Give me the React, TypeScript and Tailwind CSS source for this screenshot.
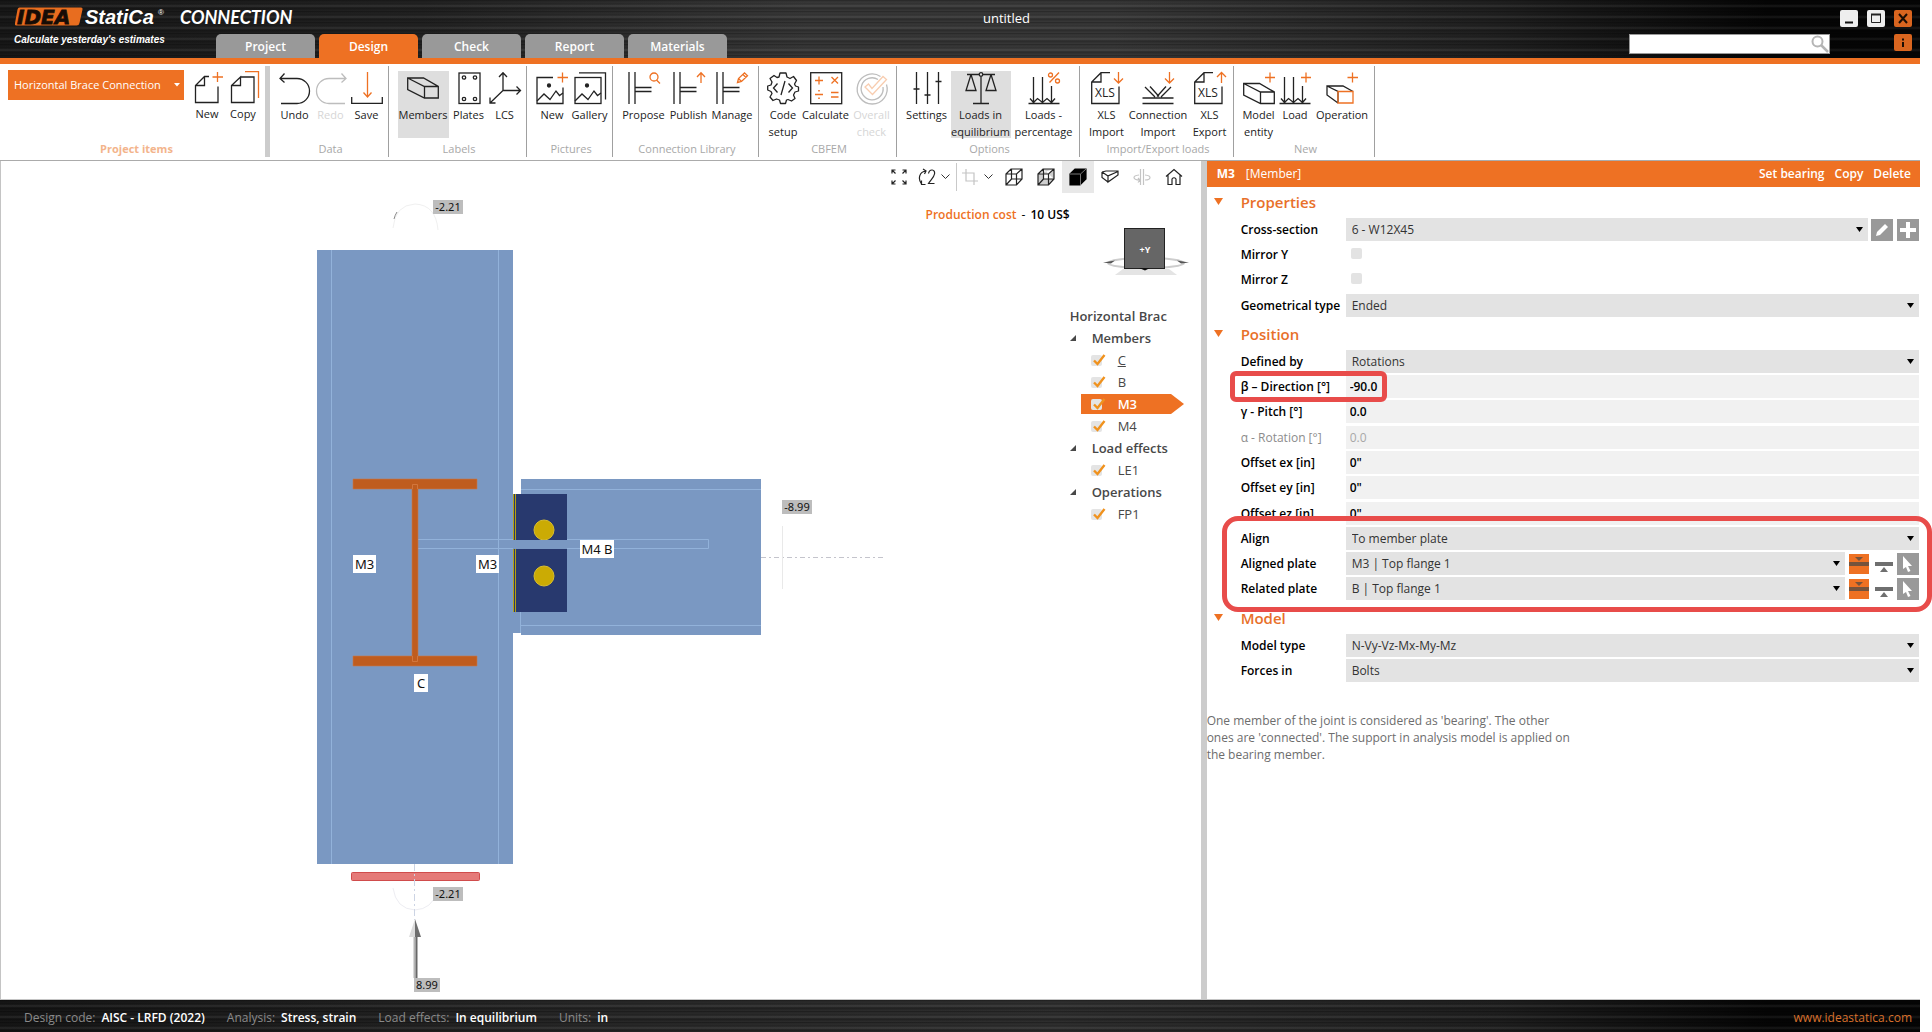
import React, { useState } from "react";

const ORANGE = "#ee7123";
const INK = "#222222";

/** --- Ribbon icons, all on a 32x32 grid --- */
const Icon: React.FC<{ children: React.ReactNode; faded?: boolean }> = ({ children, faded }) => (
  <svg
    width="32"
    height="32"
    viewBox="0 0 32 32"
    fill="none"
    stroke={faded ? "#bdbdbd" : INK}
    strokeWidth="1.3"
    className="block shrink-0 overflow-visible"
    aria-hidden="true"
  >
    {children}
  </svg>
);

const icons: Record<string, React.ReactNode> = {
  newItem: (
    <Icon>
      <path d="M27 15.500V31.500H4.500V14.500L13.500 5.500H18M13.500 5.500V14.500H4.500" />
      <path d="M26.500 1V11M21.500 6H32" stroke={ORANGE} />
    </Icon>
  ),
  copyItem: (
    <Icon>
      <path d="M14 6H27V31.500H4.500V14.500L13.500 6V14.500H4.500" />
      <path d="M18 .7H31.500V27" stroke={ORANGE} />
    </Icon>
  ),
  undo: (
    <Icon>
      <path d="M5.500 1.500L1 6.500L5.500 10.500M1 6.500H18A12.500 12.500 0 0 1 18 31.500H2" />
    </Icon>
  ),
  redo: (
    <Icon faded>
      <path d="M26.500 1.500L31 6.500L26.500 10.500M31 6.500H14A12.500 12.500 0 0 0 14 31.500H30" />
    </Icon>
  ),
  save: (
    <Icon>
      <path d="M.7 25V31.300H31.300V25" />
      <path d="M16.500 0V25M12.500 20.500L16.500 25L20.500 20.500" stroke={ORANGE} />
    </Icon>
  ),
  members: (
    <Icon>
      <path d="M.7 6H16.500L31.300 14.500V26H17.500L.7 17.500ZM.7 6L17.500 14.500H31.300M17.500 14.500V26" />
    </Icon>
  ),
  plates: (
    <Icon>
      <rect x="6" y="1" width="21" height="30.500" />
      <circle cx="11" cy="5.500" r="1.700" />
      <circle cx="22" cy="5.500" r="1.700" />
      <circle cx="11" cy="27" r="1.700" />
      <circle cx="22" cy="27" r="1.700" />
    </Icon>
  ),
  lcs: (
    <Icon>
      <path d="M14 1V18.500L1 31M14 18.500H31.500M10 5L14 .8L18 5M27.500 14.500L31.500 18.500L27.500 22.500M1 25.500V31H6.500" />
    </Icon>
  ),
  newPicture: (
    <Icon>
      <path d="M17 5.500H1V31.500H27V15.500" />
      <path d="M1 29L8 22L14 27.500L20 19L23.500 23.500L27 21" />
      <circle cx="13" cy="13.500" r="1.500" fill={INK} />
      <path d="M26.500 .5V10.500M21.500 5.500H32" stroke={ORANGE} />
    </Icon>
  ),
  gallery: (
    <Icon>
      <rect x="1" y="5.500" width="26" height="26" />
      <path d="M1 29L8 22L14 27.500L20 19L23.500 23.500L27 21M5 .8H31.500V27.500" />
      <circle cx="13" cy="13.500" r="1.500" fill={INK} />
    </Icon>
  ),
  propose: (
    <Icon>
      <path d="M1 0V32M7 0V32M7 15.500H23.500M7 19.500H23.500" />
      <circle cx="26" cy="5" r="4" stroke={ORANGE} />
      <path d="M28.500 8L32 11.500" stroke={ORANGE} />
    </Icon>
  ),
  publish: (
    <Icon>
      <path d="M1 0V32M7 0V32M7 15.500H23.500M7 19.500H23.500" />
      <path d="M28 11V1M24 5L28 .8L32 5" stroke={ORANGE} />
    </Icon>
  ),
  manage: (
    <Icon>
      <path d="M1 0V32M7 0V32M7 15.500H23.500M7 19.500H23.500" />
      <path d="M21.500 10.500L22.500 6.500L28.500 .8L31.500 3.800L25.500 9.500ZM22.500 6.500L25.500 9.500M27 2.500L30 5.500" stroke={ORANGE} />
    </Icon>
  ),
  code: (
    <Icon>
      <path d="M13 1H19L20 5L23 6.500L26.500 4.500L29.500 8.500L27.500 12L28.500 14L31.500 15V19L28 20L26.500 23L28 26.500L24.500 29L21 27.500L19.500 28L18.500 31.500H13.500L12.500 28L9.500 27L6 28.500L3 25L5 21.500L4 19.500L.7 18V14L4 13L5 10L3 6.500L7 3.500L10 5.500L12 5Z" strokeLinejoin="round" />
      <path d="M10.500 11.500L6.500 16L10.500 20.500M21.500 11.500L25.500 16L21.500 20.500M18 9L14 23" />
    </Icon>
  ),
  calculate: (
    <Icon>
      <rect x=".7" y=".7" width="31" height="31" />
      <path d="M5 8.500H13M9 4.500V12.500M21.500 5L28 11.500M28 5L21.500 11.500M5 22.500H13M21 20.500H28.500M21 25H28.500" stroke={ORANGE} />
      <path d="M9 18V19.500M9 25.500V27" stroke={ORANGE} strokeWidth="1.6" />
    </Icon>
  ),
  overall: (
    <Icon faded>
      <path d="M24.500 4.500A15 15 0 1 0 30.500 12.500" />
      <path d="M22 7.500A11 11 0 1 0 27 15" />
      <path d="M9 15L12.500 12L16 16.500L27 4.500L30.500 7.500L16.500 22.500Z" stroke="#f8cdb0" />
    </Icon>
  ),
  settings: (
    <Icon>
      <path d="M5.500 0V32M16.500 0V32M27.500 0V32M2.500 17H8.500M13.500 23H19.500M24.500 9.500H30.500" />
    </Icon>
  ),
  equilibrium: (
    <Icon>
      <path d="M2 2.500H14M18 2.500H30M16 4.500V31.500M8 31.500H24M6 2.500L1 18.500H11L6 2.500M26 2.500L21 18.500H31L26 2.500" />
      <circle cx="16" cy="2.500" r="1.800" />
    </Icon>
  ),
  percentage: (
    <Icon>
      <path d="M.5 31.500H31.500M5.500 5V30M14.500 5V30M23.500 14V30M2 26.500L5.500 30.500L9.500 26.500L14.500 30.500L19 26.500L23.500 30.500L27 26.500" />
      <path d="M31 .5L21.500 10.500" stroke={ORANGE} />
      <circle cx="22.500" cy="3" r="2" stroke={ORANGE} />
      <circle cx="29.500" cy="9" r="2" stroke={ORANGE} />
    </Icon>
  ),
  xlsImport: (
    <Icon>
      <path d="M28 14.500V31.500H.7V10L10 .7H19M10 .7V10H.7" />
      <text x="4" y="25" fontSize="12" stroke="none" fill={INK}>XLS</text>
      <path d="M27.500 0V10.500M23 6.500L27.500 11L32 6.500" stroke={ORANGE} />
    </Icon>
  ),
  connectionImport: (
    <Icon>
      <path d="M.5 26H31.500M.5 31.500H31.500M3 15L13 25M8 14.500L17 24.500M29 15L19 25M24 14.500L15 24.500" />
      <path d="M27.500 0V10.500M23 6.500L27.500 11L32 6.500" stroke={ORANGE} />
    </Icon>
  ),
  xlsExport: (
    <Icon>
      <path d="M28 14.500V31.500H.7V10L10 .7H19M10 .7V10H.7" />
      <text x="4" y="25" fontSize="12" stroke="none" fill={INK}>XLS</text>
      <path d="M27.500 11V.5M23 5L27.500 .5L32 5" stroke={ORANGE} />
    </Icon>
  ),
  model: (
    <Icon>
      <path d="M.7 11.500H16.500L31.300 20V31.500H17.500L.7 23ZM.7 11.500L17.500 20H31.300M17.500 20V31.500" />
      <path d="M27 .5V10.500M22 5.500H32" stroke={ORANGE} />
    </Icon>
  ),
  load: (
    <Icon>
      <path d="M.5 31.500H31.500M5.500 5V30M14.500 5V30M23.500 14V30M2 26.500L5.500 30.500L9.500 26.500L14.500 30.500L19 26.500L23.500 30.500L27 26.500" />
      <path d="M27 .5V10.500M22 5.500H32" stroke={ORANGE} />
    </Icon>
  ),
  operation: (
    <Icon>
      <path d="M12 31L1 23V14H17L27 19.500M1 14L12 19.500V31" />
      <path d="M12 19.500H27V31H12ZM26.500 .5V10.500M21.500 5.500H32" stroke={ORANGE} />
    </Icon>
  ),
};

type Tool = { icon: string; lines: string[]; width: string; active?: boolean; disabled?: boolean };
type Group = { title: string; width: string; tools: Tool[] };

const groups: Group[] = [
  {
    title: "Data",
    width: "w-[119px]",
    tools: [
      { icon: "undo", lines: ["Undo"], width: "w-[36px]" },
      { icon: "redo", lines: ["Redo"], width: "w-[36px]", disabled: true },
      { icon: "save", lines: ["Save"], width: "w-[36px]" },
    ],
  },
  {
    title: "Labels",
    width: "w-[138px]",
    tools: [
      { icon: "members", lines: ["Members"], width: "w-[51px]", active: true },
      { icon: "plates", lines: ["Plates"], width: "w-[40px]" },
      { icon: "lcs", lines: ["LCS"], width: "w-[32px]" },
    ],
  },
  {
    title: "Pictures",
    width: "w-[86px]",
    tools: [
      { icon: "newPicture", lines: ["New"], width: "w-[37px]" },
      { icon: "gallery", lines: ["Gallery"], width: "w-[38px]" },
    ],
  },
  {
    title: "Connection Library",
    width: "w-[146px]",
    tools: [
      { icon: "propose", lines: ["Propose"], width: "w-[46px]" },
      { icon: "publish", lines: ["Publish"], width: "w-[44px]" },
      { icon: "manage", lines: ["Manage"], width: "w-[43px]" },
    ],
  },
  {
    title: "CBFEM",
    width: "w-[138px]",
    tools: [
      { icon: "code", lines: ["Code", "setup"], width: "w-[35px]" },
      { icon: "calculate", lines: ["Calculate"], width: "w-[50px]" },
      { icon: "overall", lines: ["Overall", "check"], width: "w-[42px]", disabled: true },
    ],
  },
  {
    title: "Options",
    width: "w-[183px]",
    tools: [
      { icon: "settings", lines: ["Settings"], width: "w-[48px]" },
      { icon: "equilibrium", lines: ["Loads in", "equilibrium"], width: "w-[60px]", active: true },
      { icon: "percentage", lines: ["Loads -", "percentage"], width: "w-[66px]" },
    ],
  },
  {
    title: "Import/Export loads",
    width: "w-[154px]",
    tools: [
      { icon: "xlsImport", lines: ["XLS", "Import"], width: "w-[43px]" },
      { icon: "connectionImport", lines: ["Connection", "Import"], width: "w-[60px]" },
      { icon: "xlsExport", lines: ["XLS", "Export"], width: "w-[43px]" },
    ],
  },
  {
    title: "New",
    width: "w-[141px]",
    tools: [
      { icon: "model", lines: ["Model", "entity"], width: "w-[37px]" },
      { icon: "load", lines: ["Load"], width: "w-[36px]" },
      { icon: "operation", lines: ["Operation"], width: "w-[58px]" },
    ],
  },
];

const ToolButton: React.FC<{ tool: Tool }> = ({ tool }) => (
  <button
    disabled={tool.disabled}
    className={`flex h-[67px] flex-col items-center pt-px text-[11px] leading-[17px] whitespace-nowrap ${tool.width} ${
      tool.active ? "bg-[#dedede]" : ""
    } ${tool.disabled ? "text-[#d6d6d6]" : "text-[#222222]"}`}
  >
    {icons[tool.icon]}
    <span className="mt-0.5 flex flex-col items-center">
      {tool.lines.map((line) => (
        <span key={line}>{line}</span>
      ))}
    </span>
  </button>
);

/** --- Black title bar with tabs --- */
const tabs = ["Project", "Design", "Check", "Report", "Materials"];

const TitleBar: React.FC = () => {
  const [tab, setTab] = useState("Design");
  return (
    <header className="flex h-16 border-b-[6px] border-[#ee7123] bg-[#111111] bg-[repeating-linear-gradient(180deg,#00000055_0px,#00000000_2px,#00000022_4px,#ffffff14_6px,#00000044_8px,#00000000_11px),linear-gradient(90deg,#181818_0%,#222222_22%,#383838_42%,#383838_58%,#202020_78%,#050505_92%)] text-white">
      <div className="w-[180px] pt-[6px] pl-[13px]">
        <svg width="160" height="40" viewBox="0 0 160 40" className="block" role="img" aria-label="IDEA StatiCa">
          <path d="M6.500 1.500H68Q70 1.500 69.500 3.500L66.500 17Q66 19.500 63.500 19.500H3Q1.500 19.500 2 17L4.500 3.500Q5 1.500 6.500 1.500Z" fill="#e86d1f" />
          <text x="4" y="17.500" fontSize="20" fontWeight="bold" fontStyle="italic" fontFamily="DejaVu Sans" fill="#160c06" stroke="#160c06" strokeWidth=".8">IDEA</text>
          <text x="72" y="18" fontSize="20" fontWeight="bold" fontStyle="italic" fontFamily="Liberation Sans" fill="#fff">StatiCa</text>
          <text x="145" y="9" fontSize="8" fontFamily="Liberation Sans" fill="#fff">®</text>
          <text x="1" y="37" fontSize="10" fontWeight="bold" fontStyle="italic" fontFamily="Liberation Sans" fill="#fff">Calculate yesterday's estimates</text>
        </svg>
      </div>
      <div className="flex flex-1 flex-col justify-between">
        <div className="flex pt-[6px]">
          <span className="w-[204px] font-['Lato',sans-serif] text-lg leading-[22px] font-bold italic">
            CONNECTION
          </span>
          <span className="flex-1 text-center text-[13px] leading-6">untitled</span>
        </div>
        <nav className="flex gap-1 pl-9">
          {tabs.map((t) => (
            <button
              key={t}
              onClick={() => setTab(t)}
              className={`h-6 w-[99px] rounded-t-[5px] pt-0.5 text-xs font-semibold ${t === tab ? "bg-[#ee7123]" : "bg-[#999999]"}`}
            >
              {t}
            </button>
          ))}
        </nav>
      </div>
      <div className="flex w-[291px] flex-col items-end gap-[7px] pt-[10px] pr-2">
        <div className="flex gap-[9px]">
          <button aria-label="Minimize" className="h-[17px] w-[18px] rounded-xs bg-[#eeeeee]">
            <svg width="18" height="17"><path d="M5 12.500H13" stroke="#111" strokeWidth="2" /></svg>
          </button>
          <button aria-label="Maximize" className="h-[17px] w-[18px] rounded-xs bg-[#eeeeee]">
            <svg width="18" height="17"><path d="M4.500 4.500H13.500V12.500H4.500Z" stroke="#222" fill="none" /><path d="M4 4.500H14" stroke="#222" strokeWidth="2" /></svg>
          </button>
          <button aria-label="Close" className="h-[17px] w-[18px] rounded-xs bg-[#d9651f]">
            <svg width="18" height="17"><path d="M5 4L13 13M13 4L5 13" stroke="#1a0d04" strokeWidth="2" /></svg>
          </button>
        </div>
        <div className="flex w-full justify-between">
          <label className="flex h-5 w-[201px] border border-[#999999] bg-white">
            <input type="text" aria-label="Search" className="min-w-0 flex-1 px-1 text-xs text-black outline-none" />
            <svg width="18" height="18" fill="none" stroke="#b5b5b5" strokeWidth="2"><circle cx="6.500" cy="6.500" r="5" /><path d="M10 10L17 17" strokeWidth="2.500" /></svg>
          </label>
          <button aria-label="About" className="h-[17px] w-[18px] rounded-xs bg-[#d9651f]">
            <svg width="18" height="17"><path d="M9 4.500V6.500M9 8V13" stroke="#1a0d04" strokeWidth="2" /></svg>
          </button>
        </div>
      </div>
    </header>
  );
};

const Ribbon: React.FC = () => (
  <div className="flex h-[97px] border-b border-[#ababab] pt-0.5 pb-[3px]">
    <div className="flex w-[270px] flex-col justify-between border-r-[5px] border-[#cccccc] pl-2">
      <div className="flex pt-1">
        <button className="mr-[6px] flex h-[30px] w-[176px] items-center justify-between bg-[#ee7123] pr-1 pl-[6px] text-[11px] whitespace-nowrap text-white">
          Horizontal Brace Connection
          <svg width="6" height="4"><path d="M0 0H6L3 3.500Z" fill="#fff" /></svg>
        </button>
        <ToolButton tool={{ icon: "newItem", lines: ["New"], width: "w-[34px]" }} />
        <ToolButton tool={{ icon: "copyItem", lines: ["Copy"], width: "w-[38px]" }} />
      </div>
      <span className="text-center text-[11px] leading-4 font-bold text-[#f3b48c]">Project items</span>
    </div>
    {groups.map((g) => (
      <div key={g.title} className={`flex flex-col justify-between border-r border-[#a0a0a0] pl-[3px] ${g.width}`}>
        <div className="flex justify-center pt-[5px]">
          {g.tools.map((t) => (
            <ToolButton key={t.icon} tool={t} />
          ))}
        </div>
        <span className="text-center text-[11px] leading-4 text-[#a8a8a8]">{g.title}</span>
      </div>
    ))}
  </div>
);

/** --- 3D scene, front view --- */
const Tag: React.FC<{ x: number; y: number; w: number; text: string; grey?: boolean }> = ({
  x,
  y,
  w,
  text,
  grey,
}) => (
  <g>
    <rect x={x} y={y} width={w} height={grey ? 14 : 18} fill={grey ? "#bdbdbd" : "#fff"} />
    <text x={x + w / 2} y={y + (grey ? 11 : 14)} textAnchor="middle" fontSize={grey ? 11 : 13} fill="#111">
      {text}
    </text>
  </g>
);

const Scene: React.FC = () => (
  <svg width="1063" height="838" viewBox="1 161 1063 838" className="block font-['Noto_Sans',sans-serif]">
    {/* moment arcs */}
    <path d="M393 228Q395 205 415 204Q436 205 438 230" fill="none" stroke="#f0f0f0" />
    <path d="M394 219Q395 215 397 212" fill="none" stroke="#8a8a8a" />
    <path d="M393 888Q396 909 415 910Q432 909 437 892" fill="none" stroke="#ededf2" />

    {/* column C */}
    <rect x="317" y="250" width="196" height="614" fill="#7a98c2" />
    <path d="M331.500 250V864M498.500 250V864" stroke="#92b2da" />

    {/* beam B */}
    <rect x="513" y="495" width="9" height="138" fill="#7a98c2" />
    <rect x="521" y="479" width="240" height="156" fill="#7a98c2" />
    <path d="M521 489.500H761M521 625.500H761M520.500 611V633" stroke="#92b2da" />

    {/* fin plates and bolts */}
    <rect x="513" y="494" width="54" height="118" fill="#28396e" />
    <path d="M513.500 494V612M515.500 494V612" stroke="#b3a114" />
    <circle cx="544" cy="530" r="10" fill="#cbab04" stroke="#d9be2e" />
    <circle cx="544" cy="576" r="10" fill="#cbab04" stroke="#d9be2e" />
    <rect x="512" y="540" width="60" height="9" fill="#7a98c2" />
    <path d="M417 539.500H513M567 539.500H708.500V548.500H567M417 548.500H513" fill="none" stroke="#92b2da" />

    {/* selected member M3 */}
    <path d="M353 479H477V489H418V656H477V666H353V656H412V489H353Z" fill="#bf5c1e" stroke="#c87a4c" strokeWidth=".6" />
    <path d="M412.500 489V484.500H417.500V489M412.500 656V661.500H417.500V656" fill="none" stroke="#d2763c" />

    {/* support and loads */}
    <rect x="351.500" y="872.500" width="128" height="8" rx="1" fill="#e57a78" stroke="#d04c4c" />
    <path d="M414.500 864V920" stroke="#ccd4e4" strokeDasharray="7 3 2 3" />
    <path d="M761 557.500H884" stroke="#c4c4cc" strokeDasharray="5 3 2 3" />
    <path d="M782.500 526V589" stroke="#e9e9e9" />
    <path d="M415 919L409 937H415Z" fill="#dcdcdc" />
    <path d="M415 919L421 937H415Z" fill="#6f6f6f" />
    <path d="M414.500 937V978" stroke="#b5b5b5" strokeWidth="2" />
    <path d="M416.500 937V978" stroke="#686868" strokeWidth="2" />

    <Tag x={433} y={200} w={30} text="-2.21" grey />
    <Tag x={782} y={500} w={30} text="-8.99" grey />
    <Tag x={433} y={887} w={30} text="-2.21" grey />
    <Tag x={414} y={978} w={26} text="8.99" grey />
    <Tag x={353} y={555} w={23} text="M3" />
    <Tag x={476} y={555} w={23} text="M3" />
    <Tag x={580} y={540} w={34} text="M4 B" />
    <Tag x={414} y={674} w={14} text="C" />
  </svg>
);

/** --- Toolbar over the 3D view --- */
const ViewIcon: React.FC<{ d: string; light?: boolean; fill?: string; children?: React.ReactNode }> = ({
  d,
  light,
  fill = "none",
  children,
}) => (
  <svg width="18" height="18" viewBox="0 0 18 18" fill={fill} stroke={light ? "#c4c4c4" : "#222"} strokeWidth="1.2">
    <path d={d} />
    {children}
  </svg>
);

const CUBE = "M1 6L6 1H17V11L11.500 17H1ZM1 6H11.500L17 1M11.500 6V17";

const ViewToolbar: React.FC = () => (
  <div className="mr-px flex h-8 items-center">
    <button aria-label="Zoom all" className="flex h-8 w-7 items-center justify-center">
      <ViewIcon d="M2 5.500V2H5.500M2 2L5.500 5.500M12.500 2H16V5.500M16 2L12.500 5.500M2 12.500V16H5.500M2 16L5.500 12.500M16 12.500V16H12.500M16 16L12.500 12.500" />
    </button>
    <button aria-label="Rotate view" className="flex h-8 w-7 items-center justify-center">
      <ViewIcon d="M3.500 16C-.5 10.500 1.500 3.500 8 3M5 1L8 3L6.500 6M7.500 16.500H3.500V12.500M10.500 5.500C11.500 .5 17.500 1 16.500 6C16 9.500 12.500 12 10.500 15.500H16.500" />
    </button>
    <button aria-label="View options" className="flex h-8 w-[15px] items-center">
      <svg width="9" height="6" fill="none" stroke="#333"><path d="M.5 .5L4.500 4.500L8.500 .5" /></svg>
    </button>
    <span className="h-7 w-px bg-[#c9c9c9]" />
    <button aria-label="Clip" className="flex h-8 w-[27px] items-center justify-center">
      <ViewIcon light d="M5 1V13H17M1 5H13V17" />
    </button>
    <button aria-label="Clip options" className="flex h-8 w-[14px] items-center">
      <svg width="9" height="6" fill="none" stroke="#333"><path d="M.5 .5L4.500 4.500L8.500 .5" /></svg>
    </button>
    <button aria-label="Wireframe" className="flex h-8 w-8 items-center justify-center">
      <ViewIcon d={`${CUBE}M6.500 1V11H17M1 17L6.500 11`} />
    </button>
    <button aria-label="Transparent" className="flex h-8 w-8 items-center justify-center">
      <ViewIcon fill="#cfcfcf" d={`${CUBE}M6.500 1V11H17M1 17L6.500 11`} />
    </button>
    <button aria-label="Solid" className="flex h-8 w-8 items-center justify-center bg-[#e8e8e8]">
      <ViewIcon d="">
        <path d="M1 6L6 1H17V11L11 17H1Z" fill="#000" stroke="#000" />
        <path d="M1 6H11.500L17 1M11.500 6V17" stroke="#777" strokeWidth="1" />
      </ViewIcon>
    </button>
    <button aria-label="Section" className="flex h-8 w-8 items-center justify-center">
      <ViewIcon d="M1 4L5 3H17V7L7 14V8L17 3.500M1 4L7 8M1 4V9.500L7 14" />
    </button>
    <button aria-label="Mirror" className="flex h-8 w-8 items-center justify-center">
      <ViewIcon light d="M7.500 1V17M10.500 1V17M6 7Q1 7.500 1 9.500Q1 12 7 12M5 10L7 12L5 14.500M12 7Q17 7.500 17 9.500Q17 12 12 12" />
    </button>
    <button aria-label="Home" className="flex h-8 w-8 items-center justify-center">
      <ViewIcon d="M1 8.500L9 1.500L17 8.500M3 7V16.500H7V11Q9 8.500 11 11V16.500H15V7" />
    </button>
  </div>
);

/** --- Entity tree --- */
const tree = [
  { title: "Members", items: ["C", "B", "M3", "M4"] },
  { title: "Load effects", items: ["LE1"] },
  { title: "Operations", items: ["FP1"] },
];

const EntityTree: React.FC = () => (
  <div className="w-[115px] text-[13px] leading-[22px] text-[#484848]">
    <div className="font-semibold whitespace-nowrap">Horizontal Brac</div>
    {tree.map((branch) => (
      <div key={branch.title}>
        <div className="flex items-center font-semibold whitespace-nowrap">
          <svg width="6" height="6" className="mr-4"><path d="M6 0V6H0Z" fill="#484848" /></svg>
          {branch.title}
        </div>
        {branch.items.map((item) => (
          <label
            key={item}
            className={`relative ml-[11px] flex h-[22px] items-center pl-[10px] ${item === "M3" ? "font-semibold text-white" : ""}`}
          >
            {item === "M3" && (
              <svg width="103" height="20" className="absolute left-0">
                <path d="M0 0H90L103 10L90 20H0Z" fill={ORANGE} />
              </svg>
            )}
            <span className="relative mr-4 flex">
              <input type="checkbox" defaultChecked className="size-[11px] appearance-none rounded-xs bg-[#e4e4e4]" />
              <svg width="14" height="12" className="pointer-events-none absolute -top-px left-0.5" fill="none">
                <path d="M1 6.500L4.500 10L11.500 1" stroke="#f0921e" strokeWidth="2.400" />
              </svg>
            </span>
            <span className={`relative ${item === "C" ? "underline" : ""}`}>{item}</span>
          </label>
        ))}
      </div>
    ))}
  </div>
);

const Viewport: React.FC = () => (
  <section className="relative overflow-hidden border-l border-[#c4c4c4] bg-white">
    <Scene />
    <div className="absolute top-0 right-[10px] flex flex-col items-end">
      <ViewToolbar />
      <p className="mt-3 mr-[121px] text-xs leading-5 font-semibold text-black">
        <span className="text-[#ee7123]">Production cost</span>
        <span className="mx-[5px] font-normal">-</span>10 US$
      </p>
      <svg width="88" height="56" className="block">
        <ellipse cx="43" cy="38" rx="38" ry="5" fill="none" stroke="#cdcdcd" strokeWidth="2" />
        <path d="M0 37.500L12 35.500L8 38.500ZM86 37.500L74 35.500L78 38.500Z" fill="#555" />
        <path d="M20 44H66L74 50H12Z" fill="#e4e4e4" />
        <rect x="21.500" y="3.500" width="40" height="40" fill="#666" stroke="#222" />
        <path d="M36 43L42 45.500L47 43Z" fill="#111" />
        <text x="42" y="28" textAnchor="middle" fontSize="9" fontWeight="bold" fill="#fff">+Y</text>
      </svg>
      <div className="mt-6 mr-[6px]">
        <EntityTree />
      </div>
    </div>
  </section>
);

/** --- Property grid --- */
const Row: React.FC<{ id: string; label: string; muted?: boolean; children: React.ReactNode }> = ({
  id,
  label,
  muted,
  children,
}) => (
  <div className="mb-[2px] flex h-[23px] items-center nth-[3n]:mb-[3px]">
    <label htmlFor={id} className={`w-[105px] shrink-0 whitespace-nowrap ${muted ? "text-[#8c8c8c]" : "font-semibold text-black"}`}>
      {label}
    </label>
    {children}
  </div>
);

const SelectField: React.FC<{ id: string; value: string }> = ({ id, value }) => (
  <div className="relative h-full flex-1">
    <select id={id} className="h-full w-full appearance-none bg-[#e3e3e3] pr-5 pl-[6px] text-[#333333] outline-none">
      <option>{value}</option>
    </select>
    <svg width="7" height="5" className="pointer-events-none absolute top-[9px] right-[5px]">
      <path d="M0 0H7L3.500 5Z" fill="#000" />
    </svg>
  </div>
);

const TextField: React.FC<{ id: string; value: string; muted?: boolean }> = ({ id, value, muted }) => (
  <input
    id={id}
    type="text"
    defaultValue={value}
    disabled={muted}
    className={`h-full min-w-0 flex-1 bg-[#f1f1f1] pl-1 outline-none ${muted ? "text-[#a8a8a8]" : "font-semibold text-black"}`}
  />
);

const Heading: React.FC<{ children: React.ReactNode }> = ({ children }) => (
  <h2 className="mb-0.5 flex h-[29px] items-center text-[15px] font-semibold text-[#e8702a]">
    <svg width="9" height="7" className="mr-[18px] ml-[7px]"><path d="M0 0H9L4.500 7Z" fill={ORANGE} /></svg>
    {children}
  </h2>
);

const PlateRow: React.FC<{ id: string; label: string; value: string }> = ({ id, label, value }) => (
  <Row id={id} label={label}>
    <SelectField id={id} value={value} />
    <div className="flex h-full items-center pl-1">
      <button aria-label={`${label} upper side`}>
        <svg width="20" height="20" className="block">
          <rect width="20" height="20" fill={ORANGE} />
          <path d="M0 8H20V12H0ZM6 3H14L10 7Z" fill="#75533c" />
        </svg>
      </button>
      <button aria-label={`${label} lower side`} className="mr-1 ml-[6px]">
        <svg width="18" height="20" className="block">
          <path d="M0 8H18V12H0ZM5 18H13L9 13Z" fill="#6f6f6f" />
        </svg>
      </button>
      <button aria-label={`Pick ${label}`}>
        <svg width="22" height="22" className="block">
          <rect width="22" height="22" fill="#999" />
          <path d="M6 3L15 13H11L13.500 18L11 19L9 14L6 16Z" fill="#fff" />
        </svg>
      </button>
    </div>
  </Row>
);

const Properties: React.FC = () => (
  <section className="text-xs">
    <div className="flex h-[26px] items-center bg-[#ee7123] pr-[9px] pl-[10px] text-white">
      <span className="font-bold">M3</span>
      <span className="ml-[11px] flex-1">[Member]</span>
      <div className="flex gap-[10px] font-semibold">
        <button>Set bearing</button>
        <button>Copy</button>
        <button>Delete</button>
      </div>
    </div>

    <div className="pr-px">
      <Heading>Properties</Heading>
      <div className="pl-[34px]">
        <Row id="cross-section" label="Cross-section">
          <SelectField id="cross-section" value="6 - W12X45" />
          <div className="flex gap-1 pl-[3px]">
            <button aria-label="Edit cross-section">
              <svg width="22" height="22" className="block">
                <rect width="22" height="22" fill="#999" />
                <path d="M5 17L6 13L14 5L17 8L9 16Z" fill="#fff" />
              </svg>
            </button>
            <button aria-label="Add cross-section">
              <svg width="22" height="22" className="block">
                <rect width="22" height="22" fill="#999" />
                <path d="M11 3V19M3 11H19" stroke="#fff" strokeWidth="4" />
              </svg>
            </button>
          </div>
        </Row>
        <Row id="mirror-y" label="Mirror Y">
          <input id="mirror-y" type="checkbox" className="mb-0.5 ml-[5px] size-[11px] appearance-none rounded-xs bg-[#e3e3e3]" />
        </Row>
        <Row id="mirror-z" label="Mirror Z">
          <input id="mirror-z" type="checkbox" className="mb-0.5 ml-[5px] size-[11px] appearance-none rounded-xs bg-[#e3e3e3]" />
        </Row>
        <Row id="geometrical-type" label="Geometrical type">
          <SelectField id="geometrical-type" value="Ended" />
        </Row>
      </div>

      <Heading>Position</Heading>
      <div className="pl-[34px]">
        <Row id="defined-by" label="Defined by">
          <SelectField id="defined-by" value="Rotations" />
        </Row>
        <div className="relative mb-[2px]">
          <Row id="direction" label="β – Direction [°]">
            <TextField id="direction" value="-90.0" />
          </Row>
          <div className="pointer-events-none absolute -top-1 -left-[11px] h-[31px] w-[157px] rounded-md border-[5px] border-[#e84c4a]" />
        </div>
        <Row id="pitch" label="γ - Pitch [°]">
          <TextField id="pitch" value="0.0" />
        </Row>
        <Row id="rotation" label="α - Rotation [°]" muted>
          <TextField id="rotation" value="0.0" muted />
        </Row>
        <Row id="offset-ex" label="Offset ex [in]">
          <TextField id="offset-ex" value={'0"'} />
        </Row>
        <Row id="offset-ey" label="Offset ey [in]">
          <TextField id="offset-ey" value={'0"'} />
        </Row>
        <Row id="offset-ez" label="Offset ez [in]">
          <TextField id="offset-ez" value={'0"'} />
        </Row>
        <div className="relative">
          <Row id="align" label="Align">
            <SelectField id="align" value="To member plate" />
          </Row>
          <PlateRow id="aligned-plate" label="Aligned plate" value="M3 | Top flange 1" />
          <PlateRow id="related-plate" label="Related plate" value="B | Top flange 1" />
          <div className="pointer-events-none absolute -top-[11px] -right-[13px] -bottom-3 -left-[19px] z-10 rounded-2xl border-[5px] border-[#e84c4a]" />
        </div>
      </div>

      <Heading>Model</Heading>
      <div className="pl-[34px]">
        <Row id="model-type" label="Model type">
          <SelectField id="model-type" value="N-Vy-Vz-Mx-My-Mz" />
        </Row>
        <Row id="forces-in" label="Forces in">
          <SelectField id="forces-in" value="Bolts" />
        </Row>
      </div>
    </div>

    <p className="mt-[30px] max-w-[364px] leading-[17px] text-[#6d6d6d]">
      One member of the joint is considered as 'bearing'. The other ones are 'connected'. The support in
      analysis model is applied on the bearing member.
    </p>
  </section>
);

const status = [
  ["Design code:", "AISC - LRFD (2022)"],
  ["Analysis:", "Stress, strain"],
  ["Load effects:", "In equilibrium"],
  ["Units:", "in"],
];

const StatusBar: React.FC = () => (
  <footer className="flex h-[33px] items-center border-t border-[#c4c4c4] bg-[#111111] bg-[repeating-linear-gradient(180deg,#00000066_0px,#00000000_2px,#00000033_4px,#ffffff14_6px,#00000055_8px,#00000000_11px),linear-gradient(90deg,#161616_0%,#282828_30%,#303030_55%,#202020_78%,#050505_92%)] pt-1 pr-2 pl-6 text-xs text-white">
    {status.map(([label, value]) => (
      <span key={label} className="mr-[22px] flex gap-[6px]">
        <span className="text-[#8a8a8a]">{label}</span>
        <span className="font-semibold">{value}</span>
      </span>
    ))}
    <a href="#site" className="ml-auto text-[#d8702c]">
      www.<span className="font-medium">ideastatica</span>.com
    </a>
  </footer>
);

const App: React.FC = () => (
  <div className="min-h-screen overflow-hidden bg-white pr-3 font-['Open_Sans','Noto_Sans',sans-serif]">
    <div className="flex min-h-screen flex-col">
      <TitleBar />
      <Ribbon />
      <main className="grid flex-1 grid-cols-[1200fr_6px_713fr]">
        <Viewport />
        <div className="bg-[#cccccc]" />
        <Properties />
      </main>
      <StatusBar />
    </div>
  </div>
);

export default App;
